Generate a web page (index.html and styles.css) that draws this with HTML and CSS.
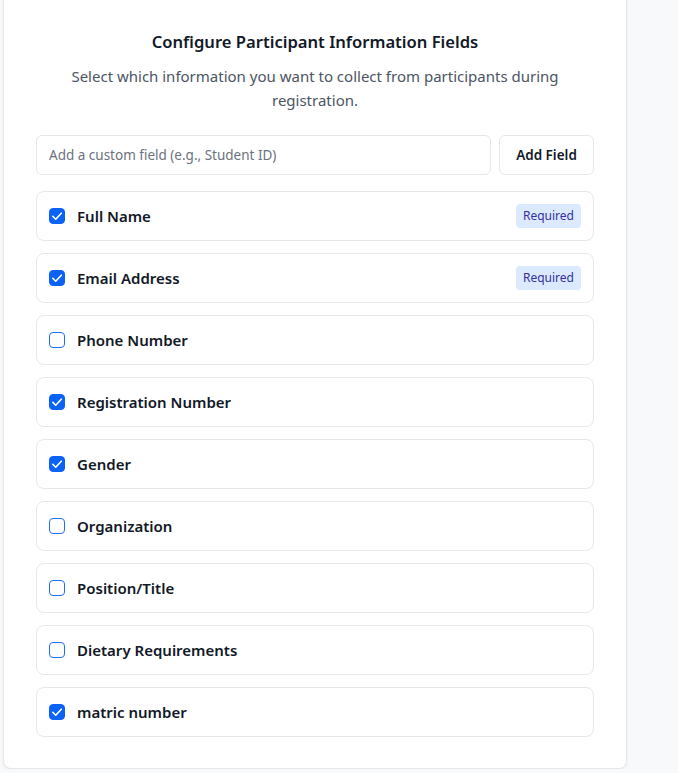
FILE: index.html
```html
<!DOCTYPE html>
<html>
<head>
<meta charset="utf-8">
<link rel="stylesheet" href="styles.css">
</head>
<body>
<div class="page">
  <div class="card">
    <h2 class="title">Configure Participant Information Fields</h2>
    <p class="subtitle">Select which information you want to collect from participants during registration.</p>
    <div class="add-row">
      <input class="field-input" type="text" placeholder="Add a custom field (e.g., Student ID)">
      <button class="add-btn">Add Field</button>
    </div>
    <div class="list">
      <div class="item"><span class="cb on"><svg viewBox="0 0 16 16"><path d="M3.8 8.3l2.9 2.9 5.6-6" /></svg></span><span class="label">Full Name</span><span class="badge">Required</span></div>
      <div class="item"><span class="cb on"><svg viewBox="0 0 16 16"><path d="M3.8 8.3l2.9 2.9 5.6-6" /></svg></span><span class="label">Email Address</span><span class="badge">Required</span></div>
      <div class="item"><span class="cb"></span><span class="label">Phone Number</span></div>
      <div class="item"><span class="cb on"><svg viewBox="0 0 16 16"><path d="M3.8 8.3l2.9 2.9 5.6-6" /></svg></span><span class="label">Registration Number</span></div>
      <div class="item"><span class="cb on"><svg viewBox="0 0 16 16"><path d="M3.8 8.3l2.9 2.9 5.6-6" /></svg></span><span class="label">Gender</span></div>
      <div class="item"><span class="cb"></span><span class="label">Organization</span></div>
      <div class="item"><span class="cb"></span><span class="label">Position/Title</span></div>
      <div class="item"><span class="cb"></span><span class="label">Dietary Requirements</span></div>
      <div class="item"><span class="cb on"><svg viewBox="0 0 16 16"><path d="M3.8 8.3l2.9 2.9 5.6-6" /></svg></span><span class="label">matric number</span></div>
    </div>
  </div>
</div>
</body>
</html>
```
FILE: styles.css
```css
* { box-sizing: border-box; }
html, body { margin: 0; padding: 0; }
body {
  background: #f8f9fb;
  font-family: "Noto Sans", "Open Sans", sans-serif;
  color: #111827;
}
.page {
  padding: 0 51px 0 3px;
}
.card {
  margin-top: -12px;
  background: #fff;
  border: 1px solid #e5e7eb;
  border-radius: 8px;
  box-shadow: 0 1px 3px rgba(0,0,0,0.06);
  padding: 40px 32px 31px 32px;
}
.title {
  margin: 0;
  text-align: center;
  font-size: 16.6px;
  font-weight: 600;
  line-height: 26px;
  color: #111827;
}
.subtitle {
  margin: 9px 0 0 0;
  text-align: center;
  font-size: 15px;
  line-height: 24px;
  color: #4b5563;
  padding: 0 20px;
}
.add-row {
  display: flex;
  gap: 8px;
  margin-top: 23px;
}
.field-input {
  flex: 1;
  height: 40px;
  border: 1px solid #e5e7eb;
  border-radius: 6px;
  padding: 0 12px;
  font: inherit;
  font-size: 13.5px;
  color: #111827;
  outline: none;
}
.field-input::placeholder { color: #6b7280; }
.add-btn {
  width: 95px;
  height: 40px;
  border: 1px solid #e5e7eb;
  border-radius: 6px;
  background: #fff;
  font: inherit;
  font-size: 13.5px;
  font-weight: 600;
  color: #111827;
}
.list {
  margin-top: 16px;
  display: flex;
  flex-direction: column;
  gap: 12px;
}
.item {
  height: 50px;
  border: 1px solid #e5e7eb;
  border-radius: 8px;
  display: flex;
  align-items: center;
  padding: 0 12px;
}
.cb {
  width: 16px;
  height: 16px;
  border: 1.5px solid #1d6ef5;
  border-radius: 4px;
  background: #fff;
  flex: none;
  position: relative;
}
.cb.on {
  background: #0b63f6;
  border-color: #0b63f6;
}
.cb svg {
  position: absolute;
  left: -1.5px;
  top: -1.5px;
  width: 16px;
  height: 16px;
  fill: none;
  stroke: #fff;
  stroke-width: 1.6;
  stroke-linecap: round;
  stroke-linejoin: round;
}
.label {
  margin-left: 12px;
  font-size: 15px;
  font-weight: 600;
  color: #111827;
  flex: 1;
}
.badge {
  background: #dbeafe;
  color: #3730a3;
  font-size: 12px;
  line-height: 24px;
  height: 24px;
  padding: 0 7px;
  border-radius: 4px;
}
```
